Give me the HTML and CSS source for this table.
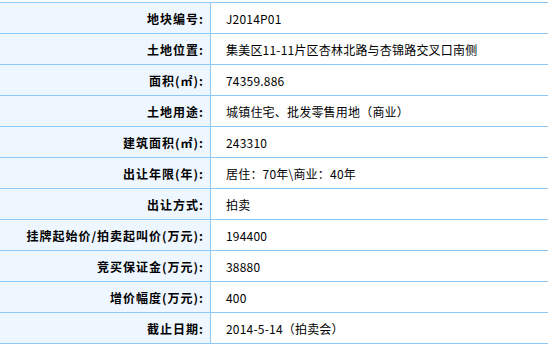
FILE: index.html
```html
<!DOCTYPE html>
<html lang="zh-CN">
<head>
<meta charset="utf-8">
<link rel="stylesheet" href="styles.css">
</head>
<body>
<div class="info">
  <div class="row"><div class="label">地块编号:</div><div class="value">J2014P01</div></div>
  <div class="row"><div class="label">土地位置:</div><div class="value">集美区11-11片区杏林北路与杏锦路交叉口南侧</div></div>
  <div class="row"><div class="label">面积(㎡):</div><div class="value">74359.886</div></div>
  <div class="row"><div class="label">土地用途:</div><div class="value">城镇住宅、批发零售用地（商业）</div></div>
  <div class="row"><div class="label">建筑面积(㎡):</div><div class="value">243310</div></div>
  <div class="row"><div class="label">出让年限(年):</div><div class="value">居住：70年\商业：40年</div></div>
  <div class="row"><div class="label">出让方式:</div><div class="value">拍卖</div></div>
  <div class="row"><div class="label">挂牌起始价/拍卖起叫价(万元):</div><div class="value">194400</div></div>
  <div class="row"><div class="label">竞买保证金(万元):</div><div class="value">38880</div></div>
  <div class="row"><div class="label">增价幅度(万元):</div><div class="value">400</div></div>
  <div class="row"><div class="label">截止日期:</div><div class="value">2014-5-14（拍卖会）</div></div>
</div>
</body>
</html>
```
FILE: styles.css
```css
html, body {
  margin: 0;
  padding: 0;
  background: #ffffff;
}
body {
  font-family: "Noto Sans CJK SC", "Liberation Sans", sans-serif;
  font-size: 12px;
  color: #000;
}
.info {
  margin-top: 2px;
  width: 548px;
  border-top: 1px solid #8ec8f6;
}
.row {
  display: flex;
  height: 30px;
  border-bottom: 1px solid #8ec8f6;
}
.label {
  width: 204px;
  padding-right: 6px;
  border-right: 1px solid #8ec8f6;
  background: #eef6ff;
  font-weight: bold;
  letter-spacing: 1px;
  text-align: right;
  display: flex;
  align-items: center;
  justify-content: flex-end;
  white-space: nowrap;
}
.value {
  flex: 1;
  padding-left: 15px;
  display: flex;
  align-items: center;
  white-space: nowrap;
  letter-spacing: 0.2px;
}
```
